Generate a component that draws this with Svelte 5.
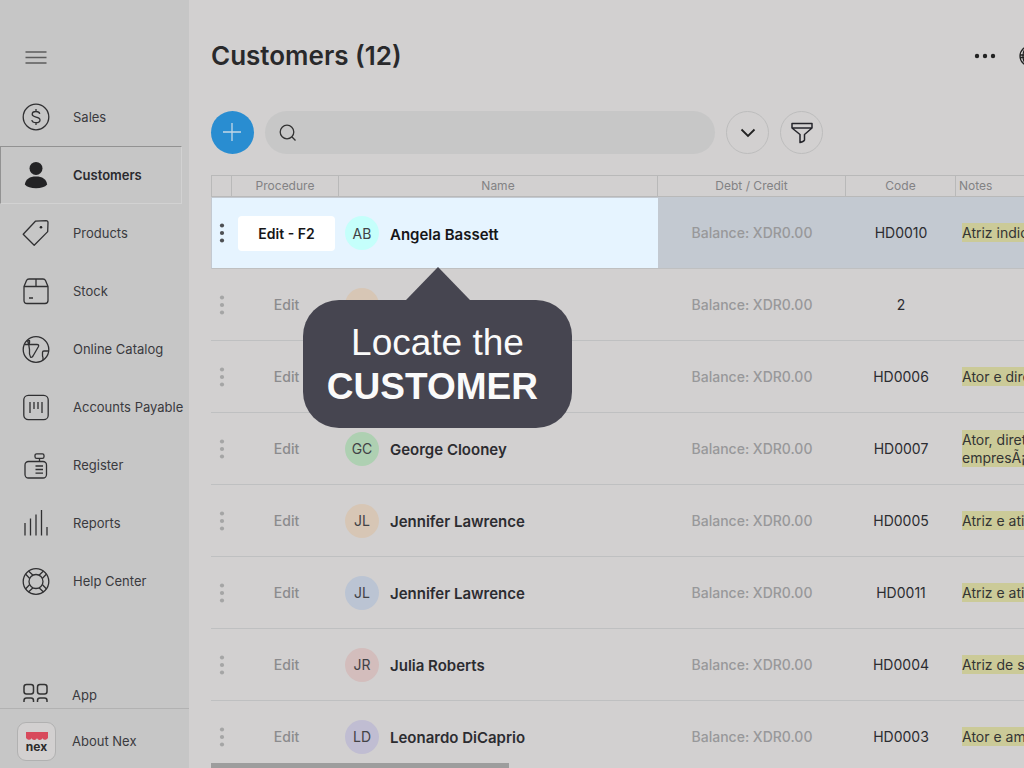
<script>
	let search = '';
	let active = 'Customers';

	const menu = ['Sales', 'Customers', 'Products', 'Stock', 'Online Catalog', 'Accounts Payable', 'Register', 'Reports', 'Help Center'];

	const customers = [
		{ initials: 'AB', name: 'Angela Bassett', color: '#c5fffb', code: 'HD0010', notes: ['Atriz indic'] },
		{ initials: '', name: '', color: '#d7c6b5', code: '2', notes: [] },
		{ initials: '', name: '', color: '#b5bfd0', code: 'HD0006', notes: ['Ator e dire'] },
		{ initials: 'GC', name: 'George Clooney', color: '#aed0b2', code: 'HD0007', notes: ['Ator, direto', 'empresÃ¡r'] },
		{ initials: 'JL', name: 'Jennifer Lawrence', color: '#d7c6b5', code: 'HD0005', notes: ['Atriz e ativ'] },
		{ initials: 'JL', name: 'Jennifer Lawrence', color: '#bbc4d3', code: 'HD0011', notes: ['Atriz e ativ'] },
		{ initials: 'JR', name: 'Julia Roberts', color: '#d3bdbc', code: 'HD0004', notes: ['Atriz de su'] },
		{ initials: 'LD', name: 'Leonardo DiCaprio', color: '#c0bdd2', code: 'HD0003', notes: ['Ator e amb'] }
	];
</script>

<div class="layout">
	<aside class="sidebar">
		<button class="burger" aria-label="Menu">
			<svg width="22" height="16" viewBox="0 0 22 16" stroke="#5c5c5c" stroke-width="1.5"><path d="M0.5 3h21M0.5 8.5h21M0.5 14h21" /></svg>
		</button>
		<nav>
			{#each menu as item}
				<a href="#{item}" class="nav-item" class:active={item === active} on:click={() => (active = item)}>
					<svg class="icon" viewBox="0 0 28 28">
						{#if item === 'Sales'}
							<circle cx="14" cy="14" r="12.8" />
							<path d="M17.8 10.8c-.4-1.5-1.8-2.3-3.8-2.3-2.3 0-3.8 1.1-3.8 2.8 0 4 7.8 1.5 7.8 5.6 0 1.7-1.7 2.8-4 2.8s-3.9-1-4.1-2.7M14 6v2.5M14 19.7v2.4" />
						{:else if item === 'Customers'}
							<circle class="solid" cx="14" cy="7.4" r="6.5" />
							<path class="solid" d="M2.8 23.5C4 18 7.5 15.6 14 15.6S24 18 25.2 23.5C23 26 19 27.2 14 27.2S5 26 2.8 23.5z" />
						{:else if item === 'Products'}
							<path d="M13.4 2.2L24 1.6Q26 1.6 26 3.6L25.7 12.6 12.2 26.2 1.2 15.2z" />
							<circle class="solid" cx="19" cy="8.2" r="1.3" />
						{:else if item === 'Stock'}
							<path d="M2 9.5L4.5 3.5Q5.2 2 7 2H21Q22.8 2 23.5 3.5L26 9.5V23.5Q26 26.5 23 26.5H5Q2 26.5 2 23.5zM2 9.5H26M14 2V9.5M7 21h4" />
						{:else if item === 'Online Catalog'}
							<circle cx="14" cy="14.5" r="12.8" />
							<path d="M5.5 5.5Q7 9.5 7.5 14.5Q7 19.5 8.5 22Q9.5 23 11 21L16.5 11.5Q17.2 9.5 15 9.5H2.5M6 9.5Q8 9 7.5 5.5L5.5 5.5M26.4 16H22Q20.5 16 20.5 17.5V20.5Q20.5 21.5 21 22.5V25" />
						{:else if item === 'Accounts Payable'}
							<rect x="1.8" y="2.3" width="24.4" height="24.4" rx="4.5" />
							<path d="M8 9V20M12 9V16M16 9V16M20 9V20" />
						{:else if item === 'Register'}
							<rect x="3" y="10.5" width="21.5" height="16.5" rx="3.5" />
							<rect x="13" y="2.8" width="9" height="4.6" rx="1.6" />
							<path d="M17.5 7.4V10.5M13.5 15h7.5M13.5 18.5h7.5M13.5 22.2h7.5" />
						{:else if item === 'Reports'}
							<path d="M3 14V26.5M8.5 9.5V26.5M14 5.5V26.5M19.5 1V26.5M25 18V26.5" />
						{:else}
							<circle cx="14" cy="14.5" r="12.8" />
							<circle cx="14" cy="14.5" r="7" />
							<path d="M6.5 4L11 8.2M3.5 7L7.7 11.5M21.5 4L17 8.2M24.5 7L20.3 11.5M6.5 25L11 20.8M3.5 22L7.7 17.5M21.5 25L17 20.8M24.5 22L20.3 17.5" />
						{/if}
					</svg>
					<span>{item}</span>
				</a>
			{/each}
		</nav>
		<a href="#app" class="nav-bottom app-link">
			<svg width="26" height="20" viewBox="0 0 26 20" fill="none" stroke="#333" stroke-width="1.5">
				<rect x="1" y="1.5" width="9.5" height="9.5" rx="2.5" />
				<rect x="14.5" y="1.5" width="9.5" height="9.5" rx="2.5" />
				<path d="M1 19V17.5Q1 15 3.5 15H8Q10.5 15 10.5 17.5V19M14.5 19V17.5Q14.5 15 17 15H21.5Q24 15 24 17.5V19" />
			</svg>
			<span>App</span>
		</a>
		<a href="#about" class="nav-bottom about">
			<span class="logo">
				<svg width="22" height="8" viewBox="0 0 22 8"><path fill="#d84a5c" d="M0 0H22V4A3 3 0 0 1 16.5 6.2A3 3 0 0 1 11 6.2A3 3 0 0 1 5.5 6.2A3 3 0 0 1 0 4z" /></svg>
				<b>nex</b>
			</span>
			<span>About Nex</span>
		</a>
	</aside>

	<main>
		<header>
			<h1>Customers (12)</h1>
			<div class="actions">
				<button aria-label="More">
					<svg width="22" height="6" viewBox="0 0 22 6" fill="#222"><circle cx="3" cy="3" r="2.2" /><circle cx="11" cy="3" r="2.2" /><circle cx="19" cy="3" r="2.2" /></svg>
				</button>
				<button aria-label="Language">
					<svg width="22" height="22" viewBox="0 0 22 22" fill="none" stroke="#222" stroke-width="1.3"><circle cx="11" cy="11" r="10" /><ellipse cx="11" cy="11" rx="7" ry="10" /><path d="M1 10H21M1 12.5H21" /></svg>
				</button>
			</div>
		</header>

		<div class="toolbar">
			<button class="round add" aria-label="Add customer">
				<svg width="19" height="19" viewBox="0 0 19 19" stroke="#c3d8e6" stroke-width="1.3"><path d="M9 0V18M0 9H18" /></svg>
			</button>
			<label class="search">
				<svg width="18" height="18" viewBox="0 0 18 18" fill="none" stroke="#333" stroke-width="1.3"><circle cx="8" cy="8" r="6.8" /><path d="M12.8 12.8L16.5 16.5" /></svg>
				<input type="text" aria-label="Search customers" bind:value={search} />
			</label>
			<button class="round" aria-label="Expand">
				<svg width="16" height="10" viewBox="0 0 16 10" fill="none" stroke="#222" stroke-width="1.8"><path d="M1.5 1.5L8 8L14.5 1.5" /></svg>
			</button>
			<button class="round" aria-label="Filter">
				<svg width="22" height="22" viewBox="0 0 22 22" fill="none" stroke="#25252b" stroke-width="1.5" stroke-linejoin="round"><path d="M1 1.5H21V6L13.5 12.5V18Q13 19.5 9 20.5V12.5L1 6zM1 6H21" /></svg>
			</button>
		</div>

		<div class="table-wrap">
			<table>
				<colgroup>
					<col class="c-menu" /><col class="c-proc" /><col class="c-name" /><col class="c-debt" /><col class="c-code" /><col class="c-notes" />
				</colgroup>
				<thead>
					<tr>
						<th></th>
						<th>Procedure</th>
						<th>Name</th>
						<th>Debt / Credit</th>
						<th>Code</th>
						<th class="left">Notes</th>
					</tr>
				</thead>
				<tbody>
					{#each customers as customer, i}
						<tr class:selected={i === 0}>
							<td>
								<button class="dots" aria-label="Options">
									<svg width="6" height="20" viewBox="0 0 6 20" fill="currentColor"><circle cx="3" cy="2.5" r="2.1" /><circle cx="3" cy="10" r="2.1" /><circle cx="3" cy="17.5" r="2.1" /></svg>
								</button>
							</td>
							<td><button class="edit">{i === 0 ? 'Edit - F2' : 'Edit'}</button></td>
							<td class="name-cell">
								<div class="person">
									<span class="avatar" style="background: {customer.color}">{customer.initials}</span>
									<span class="name">{customer.name}</span>
								</div>
								{#if i === 0}
									<div class="callout" role="tooltip">Locate the<br /><strong>CUSTOMER&nbsp;</strong></div>
								{/if}
							</td>
							<td class="debt">Balance: XDR0.00</td>
							<td class="code">{customer.code}</td>
							<td class="notes">
								{#each customer.notes as line}
									<div><mark>{line}</mark></div>
								{/each}
							</td>
						</tr>
					{/each}
				</tbody>
			</table>
		</div>
		<div class="scrollbar"></div>
	</main>
</div>

<style>
	:global(body) {
		margin: 0;
		background: #d2d0d0;
	}

	.layout {
		display: grid;
		grid-template-columns: 189px minmax(0, 1fr);
		height: 100vh;
		overflow: hidden;
		font-family: Inter, 'Liberation Sans', sans-serif;
		font-size: 14px;
		color: #2c2c30;
	}

	button {
		display: grid;
		place-items: center;
		padding: 0;
		border: none;
		background: none;
		font: inherit;
		color: inherit;
		cursor: pointer;
	}

	svg {
		display: block;
		flex: none;
	}

	a {
		color: inherit;
		text-decoration: none;
	}

	.sidebar {
		display: flex;
		flex-direction: column;
		min-height: 0;
		background: #c6c6c6;
		font-size: 13px;
		color: #3a3a3e;
	}

	.burger {
		align-self: flex-start;
		margin: 49px 0 23px 25px;
	}

	nav {
		flex: 1;
		min-height: 0;
		overflow: hidden;
	}

	.nav-item {
		display: flex;
		align-items: center;
		gap: 23px;
		box-sizing: border-box;
		height: 58px;
		margin-right: 7px;
		padding-left: 21px;
		border: 1px solid transparent;
		white-space: nowrap;
	}

	.nav-item.active {
		border-color: #929292 #d2d2d2 #d2d2d2 #929292;
		font-weight: 600;
		color: #2a2a2e;
	}

	.icon {
		width: 28px;
		height: 28px;
		fill: none;
		stroke: #303032;
		stroke-width: 1.3;
		stroke-linejoin: round;
	}

	.icon .solid {
		fill: #232325;
		stroke: none;
	}

	.nav-bottom {
		display: flex;
		align-items: center;
		padding-left: 23px;
	}

	.app-link {
		gap: 23px;
		height: 26px;
	}

	.app-link svg {
		margin-bottom: 4px;
	}

	.about {
		gap: 16px;
		box-sizing: border-box;
		height: 60px;
		padding: 5px 0 0 17px;
		border-top: 1px solid #b2b2b2;
	}

	.logo {
		display: flex;
		flex-direction: column;
		align-items: center;
		box-sizing: border-box;
		width: 39px;
		height: 39px;
		padding-top: 9px;
		border: 1px solid #b1b1b1;
		border-radius: 9px;
		background: #d2d0d0;
	}

	.logo b {
		font-size: 12px;
		line-height: 14px;
		color: #2b2b2b;
	}

	main {
		position: relative;
		display: flex;
		flex-direction: column;
		padding-left: 22px;
		overflow: hidden;
	}

	header {
		display: flex;
		justify-content: space-between;
		align-items: center;
		height: 111px;
	}

	h1 {
		margin: 0;
		font-size: 26px;
		line-height: 32px;
		font-weight: 600;
		color: #29292b;
	}

	.actions {
		display: flex;
		align-items: center;
		gap: 23px;
		margin-right: -17px;
	}

	.toolbar {
		display: flex;
		gap: 11px;
		margin-bottom: 21px;
	}

	.round {
		flex: none;
		box-sizing: border-box;
		width: 43px;
		height: 43px;
		border: 1px solid #bdbdbd;
		border-radius: 50%;
	}

	.add {
		border: none;
		background: #298dd1;
	}

	.search {
		display: flex;
		align-items: center;
		flex: 0 1 450px;
		gap: 10px;
		box-sizing: border-box;
		height: 43px;
		padding: 0 14px;
		border-radius: 22px;
		background: #c7c7c7;
	}

	.search input {
		flex: 1;
		min-width: 0;
		border: none;
		outline: none;
		background: transparent;
		font: inherit;
	}

	.table-wrap {
		flex: 1;
		min-height: 0;
		overflow: hidden;
	}

	table {
		width: 1045px;
		table-layout: fixed;
		border-collapse: separate;
		border-spacing: 0;
	}

	.c-menu {
		width: 21px;
	}

	.c-proc {
		width: 107px;
	}

	.c-name {
		width: 319px;
	}

	.c-debt {
		width: 188px;
	}

	.c-code {
		width: 110px;
	}

	.c-notes {
		width: 300px;
	}

	th,
	td {
		box-sizing: border-box;
		padding: 0;
		text-align: center;
	}

	th {
		height: 22px;
		border: 1px solid #b9b9b9;
		border-left-width: 0;
		font-size: 12px;
		line-height: 16px;
		font-weight: 400;
		color: #828284;
	}

	th:first-child {
		border-left-width: 1px;
	}

	th.left {
		padding-left: 3px;
		text-align: left;
	}

	td {
		height: 72px;
		border-bottom: 1px solid #bfc0c1;
	}

	.dots {
		width: 100%;
		height: 34px;
		color: #a5a5a5;
	}

	.edit {
		width: 97px;
		height: 35px;
		margin-left: 6px;
		border-radius: 4px;
		font-weight: 500;
		color: #8b8b8d;
	}

	.name-cell {
		position: relative;
		padding-left: 6px;
	}

	.person {
		display: flex;
		align-items: center;
		gap: 11px;
	}

	.avatar {
		display: grid;
		place-items: center;
		width: 34px;
		height: 34px;
		border-radius: 50%;
		color: #424246;
	}

	.name {
		padding-top: 2px;
		font-size: 15px;
		font-weight: 600;
	}

	.debt {
		font-weight: 500;
		color: #98989a;
	}

	.notes {
		padding-left: 6px;
		text-align: left;
		line-height: 18px;
		white-space: nowrap;
	}

	mark {
		padding: 1px 0;
		background: #cbca98;
		color: #343434;
	}

	.selected td {
		background: #c3c9d1;
	}

	.selected td:nth-child(-n + 3) {
		border-top: 1px solid #c3c9d1;
		background: #e6f4ff;
	}

	.selected td:first-child {
		border-left: 1px solid #c3c9d1;
	}

	.selected .dots {
		color: #4d4f53;
	}

	.selected .edit {
		background: #fff;
		color: #161618;
		font-weight: 600;
	}

	.selected .name {
		color: #161618;
	}

	.callout {
		position: absolute;
		top: 102px;
		left: -36px;
		z-index: 1;
		box-sizing: border-box;
		width: 269px;
		height: 128px;
		padding-top: 21px;
		border-radius: 36px;
		background: #464550;
		font-family: 'Liberation Sans', sans-serif;
		font-size: 37px;
		line-height: 44px;
		color: #fafafa;
	}

	.callout::before {
		content: '';
		position: absolute;
		bottom: 100%;
		left: 103px;
		border: solid transparent;
		border-width: 0 32px 33px;
		border-bottom-color: #464550;
	}

	.scrollbar {
		position: absolute;
		bottom: 0;
		left: 22px;
		width: 298px;
		height: 5px;
		background: #9d9d9d;
	}
</style>
